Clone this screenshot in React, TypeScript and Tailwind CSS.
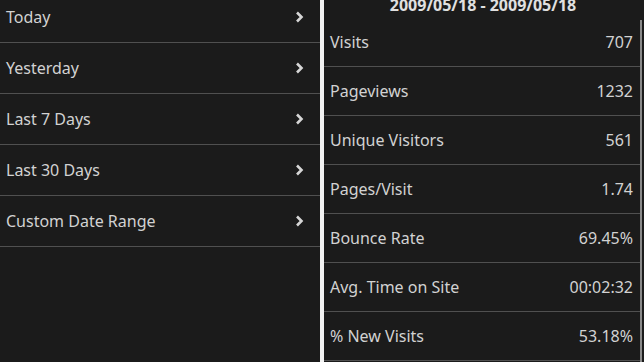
import React from 'react';

const ranges = ['Today', 'Yesterday', 'Last 7 Days', 'Last 30 Days', 'Custom Date Range'];

const stats = [
  { label: 'Visits', value: '707' },
  { label: 'Pageviews', value: '1232' },
  { label: 'Unique Visitors', value: '561' },
  { label: 'Pages/Visit', value: '1.74' },
  { label: 'Bounce Rate', value: '69.45%' },
  { label: 'Avg. Time on Site', value: '00:02:32' },
  { label: '% New Visits', value: '53.18%' },
];

function Chevron() {
  return (
    <svg width="9" height="12" viewBox="0 0 9 12" className="text-[#d6d6d6]">
      <polyline points="2,1.5 6.5,6 2,10.5" fill="none" stroke="currentColor" strokeWidth="2.6" />
    </svg>
  );
}

export default function App() {
  return (
    <div
      className="flex w-[644px] h-[362px] overflow-hidden bg-[#1b1b1b] text-[#d2d2d2]"
      style={{ fontFamily: '"Noto Sans", "Open Sans", sans-serif' }}
    >
      {/* Date range list */}
      <div className="w-[320px] shrink-0 -mt-[8px]">
        {ranges.map((r) => (
          <div
            key={r}
            className="h-[51px] flex items-center justify-between pl-[6px] pr-[16px] border-b border-[#505050] text-[16px]"
          >
            <span>{r}</span>
            <Chevron />
          </div>
        ))}
      </div>

      {/* Separator */}
      <div className="w-[4px] shrink-0 bg-[#f2f2f2]" />

      {/* Stats */}
      <div className="relative w-[320px] shrink-0 -mt-[8px]">
        <div className="h-[26px] w-[318px] flex items-center justify-center font-bold text-[16px] text-[#e0e0e0]">
          2009/05/18 - 2009/05/18
        </div>
        {stats.map((s) => (
          <div
            key={s.label}
            className="h-[49px] w-[316px] flex items-center justify-between pl-[6px] pr-[7px] border-b border-[#505050] text-[16px]"
          >
            <span>{s.label}</span>
            <span>{s.value}</span>
          </div>
        ))}
        <div className="absolute left-[316px] top-[28px] bottom-0 w-[2px] bg-[#8a8a8a]" />
      </div>
    </div>
  );
}
